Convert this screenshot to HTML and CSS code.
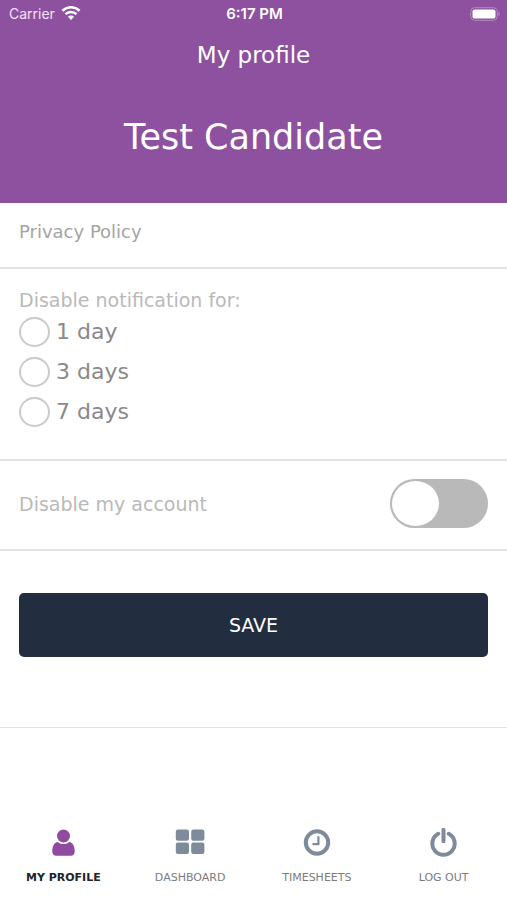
FILE: index.html
```html
<!DOCTYPE html>
<html lang="en">
<head>
<meta charset="utf-8">
<meta name="viewport" content="width=device-width, initial-scale=1">
<title>My profile</title>
<link rel="stylesheet" href="styles.css">
</head>
<body>
<header class="header">
  <div class="status">
    <span class="carrier">Carrier
      <svg width="20" height="15" viewBox="0 0 20 15" aria-hidden="true">
        <g fill="none" stroke="currentColor" stroke-width="2.6"><path d="M1.4 4.7C6.2.1 13.8.1 18.6 4.7"/><path d="M4.5 8.1c3.1-2.9 7.9-2.9 11 0"/></g>
        <path fill="currentColor" d="M6.8 10.6c1.8-1.6 4.6-1.6 6.4 0L10 13.9z"/>
      </svg>
    </span>
    <span class="time">6:17 PM</span>
    <svg class="battery" width="30" height="14" viewBox="0 0 30 14" aria-hidden="true">
      <rect x=".7" y=".7" width="26.6" height="12.6" rx="4" fill="none" stroke="#b689bf" stroke-width="1"/>
      <rect x="2.5" y="2.4" width="23" height="9.2" rx="2.2" fill="#fff"/>
      <path d="M28.5 4.8c1.6.6 1.6 3.8 0 4.4z" fill="#b689bf"/>
    </svg>
  </div>
  <h1 class="title">My profile</h1>
  <p class="name">Test Candidate</p>
</header>
<main>
  <form>
    <div class="row policy"><a href="#privacy">Privacy Policy</a></div>
    <fieldset class="row notifications">
      <legend>Disable notification for:</legend>
      <label class="option"><input type="radio" name="pause" value="1">1 day</label>
      <label class="option"><input type="radio" name="pause" value="3">3 days</label>
      <label class="option"><input type="radio" name="pause" value="7">7 days</label>
    </fieldset>
    <div class="row account">
      <label for="disable">Disable my account</label>
      <input class="switch" id="disable" type="checkbox" role="switch">
    </div>
    <div class="row actions"><button class="save" type="submit">SAVE</button></div>
  </form>
</main>
<nav class="tabs">
  <a class="tab active" href="#profile" aria-current="page">
    <svg width="28" height="30" viewBox="0 0 28 30" fill="currentColor" aria-hidden="true"><circle cx="14.5" cy="8" r="6.5"/><path d="M8.8 13.9c3.4 2.9 8 2.9 11.4 0 3.7.4 5.5 4.2 5.5 9.3 0 3.1-1.5 4.6-4 4.6H7.3c-2.5 0-4-1.5-4-4.6 0-5.1 1.8-8.9 5.5-9.3z"/></svg>
    MY PROFILE
  </a>
  <a class="tab" href="#dashboard">
    <svg width="30" height="30" viewBox="0 0 30 30" fill="currentColor" aria-hidden="true"><rect x=".8" y="1.5" width="13.2" height="11.3" rx="2.2"/><rect x="16.2" y="1.5" width="13.2" height="11.3" rx="2.2"/><rect x=".8" y="14.6" width="13.2" height="11.3" rx="2.2"/><rect x="16.2" y="14.6" width="13.2" height="11.3" rx="2.2"/></svg>
    DASHBOARD
  </a>
  <a class="tab" href="#timesheets">
    <svg width="30" height="30" viewBox="0 0 30 30" fill="none" stroke="currentColor" aria-hidden="true"><circle cx="15" cy="14.5" r="11.2" stroke-width="4"/><path d="M16.4 9.2v7h-5" stroke-width="2.2" stroke-linecap="round" stroke-linejoin="round"/></svg>
    TIMESHEETS
  </a>
  <a class="tab" href="#logout">
    <svg width="30" height="30" viewBox="0 0 30 30" fill="none" stroke="currentColor" stroke-width="4" stroke-linecap="round" aria-hidden="true"><path d="M14.5 1.8v11.5M9.2 5.8a11.2 11.2 0 1 0 10.6 0"/></svg>
    LOG OUT
  </a>
</nav>
</body>
</html>
```
FILE: styles.css
```css
* { box-sizing: border-box; }

body {
  margin: 0;
  min-height: 100vh;
  display: flex;
  flex-direction: column;
  background: #fff;
  color: #b9b9b9;
  font-family: "DejaVu Sans", "Noto Sans", sans-serif;
  font-size: 19px;
  line-height: 24px;
}

a { color: inherit; text-decoration: none; }

.header {
  padding-bottom: 40px;
  background: #8e519f;
  color: #fff;
  text-align: center;
}

.status {
  display: grid;
  grid-template-columns: 1fr auto 1fr;
  align-items: center;
  height: 27px;
  padding: 0 7px 0 9px;
  font-family: Inter, sans-serif;
  font-size: 14px;
}

.carrier {
  display: flex;
  align-items: center;
  gap: 6px;
  color: #f0e4f2;
}

.carrier svg { color: #fff; }

.time {
  font-size: 15px;
  font-weight: 600;
}

.battery { justify-self: end; }

.title {
  margin: 12px 0 0;
  font-size: 23px;
  font-weight: 400;
  line-height: 32px;
}

.name {
  margin: 41px 0 0;
  font-size: 35px;
  line-height: 51px;
}

.row {
  margin: 0;
  padding: 0 19px;
  border: 0;
  border-bottom: 2px solid #e2e2e2;
}

.policy {
  padding-top: 17px;
  padding-bottom: 23px;
  color: #a4a4a4;
  font-size: 18px;
}

.policy a { display: block; }

.notifications { padding-bottom: 27px; }

.notifications legend {
  padding: 19px 0 0;
}

.option {
  display: flex;
  align-items: center;
  gap: 6px;
  height: 40px;
  color: #8a8a8a;
  font-size: 22px;
}

.option input {
  appearance: none;
  width: 31px;
  height: 30px;
  margin: 0;
  border: 2px solid #cacaca;
  border-radius: 50%;
}

.option input:checked { border: 9px solid #8e519f; }

.account {
  display: flex;
  align-items: center;
  justify-content: space-between;
  padding-top: 18px;
  padding-bottom: 21px;
}

.switch {
  appearance: none;
  display: flex;
  width: 98px;
  height: 49px;
  margin: 0;
  padding: 2px;
  border-radius: 25px;
  background: #b9b9b9;
}

.switch::before {
  content: "";
  width: 47px;
  height: 45px;
  border-radius: 50%;
  background: #fff;
}

.switch:checked {
  justify-content: flex-end;
  background: #8e519f;
}

.actions {
  padding-top: 42px;
  padding-bottom: 70px;
  border-bottom-width: 1px;
}

.save {
  display: block;
  width: 100%;
  height: 64px;
  border: 0;
  border-radius: 5px;
  background: #222d40;
  color: #fff;
  font: inherit;
}

.tabs {
  display: grid;
  grid-template-columns: repeat(4, 1fr);
  margin-top: auto;
  padding-bottom: 12px;
}

.tab {
  display: flex;
  flex-direction: column;
  align-items: center;
  gap: 10px;
  color: #7c7c7c;
  font-size: 11px;
  line-height: 20px;
}

.tab svg { color: #7e8b9a; }

.active {
  color: #20242b;
  font-weight: 700;
}

.active svg { color: #8e4b9f; }
```
